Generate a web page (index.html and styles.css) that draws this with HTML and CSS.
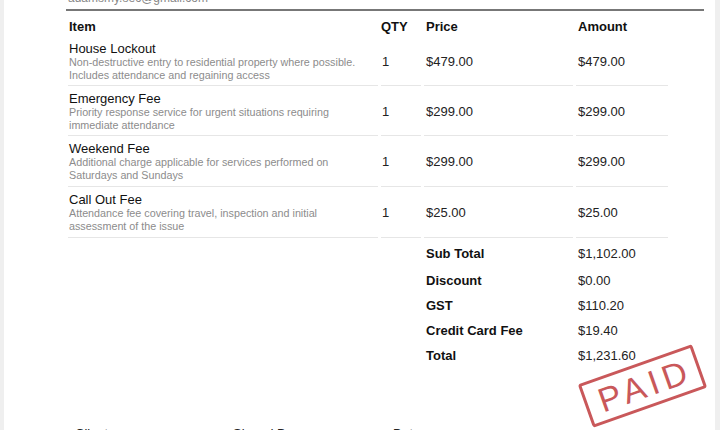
FILE: index.html
```html
<!DOCTYPE html>
<html lang="en">
<head>
    <meta charset="UTF-8">
    <meta name="viewport" content="width=device-width, initial-scale=1.0">
    <title>Invoice</title>
    <link rel="stylesheet" href="styles.css">
</head>
<body>
    <div class="sheet">
        <div class="bill-to">
            <div class="email">adamsmy.sec@gmail.com</div>
        </div>

        <table class="items">
            <colgroup>
                <col class="col-item">
                <col class="col-qty">
                <col class="col-price">
                <col class="col-amount">
            </colgroup>
            <thead>
                <tr>
                    <th class="first">Item</th>
                    <th class="qty">QTY</th>
                    <th>Price</th>
                    <th>Amount</th>
                </tr>
            </thead>
            <tbody>
                <tr>
                    <td class="first">
                        <div class="name">House Lockout</div>
                        <div class="desc">Non-destructive entry to residential property where possible. Includes attendance and regaining access</div>
                    </td>
                    <td class="qty">1</td>
                    <td>$479.00</td>
                    <td>$479.00</td>
                </tr>
                <tr>
                    <td class="first">
                        <div class="name">Emergency Fee</div>
                        <div class="desc">Priority response service for urgent situations requiring immediate attendance</div>
                    </td>
                    <td class="qty">1</td>
                    <td>$299.00</td>
                    <td>$299.00</td>
                </tr>
                <tr>
                    <td class="first">
                        <div class="name">Weekend Fee</div>
                        <div class="desc">Additional charge applicable for services performed on Saturdays and Sundays</div>
                    </td>
                    <td class="qty">1</td>
                    <td>$299.00</td>
                    <td>$299.00</td>
                </tr>
                <tr>
                    <td class="first">
                        <div class="name">Call Out Fee</div>
                        <div class="desc">Attendance fee covering travel, inspection and initial assessment of the issue</div>
                    </td>
                    <td class="qty">1</td>
                    <td>$25.00</td>
                    <td>$25.00</td>
                </tr>
            </tbody>
            <tfoot>
                <tr class="subtotal">
                    <td colspan="2"></td>
                    <th>Sub Total</th>
                    <td>$1,102.00</td>
                </tr>
                <tr>
                    <td colspan="2"></td>
                    <th>Discount</th>
                    <td>$0.00</td>
                </tr>
                <tr>
                    <td colspan="2"></td>
                    <th>GST</th>
                    <td>$110.20</td>
                </tr>
                <tr>
                    <td colspan="2"></td>
                    <th>Credit Card Fee</th>
                    <td>$19.40</td>
                </tr>
                <tr>
                    <td colspan="2"></td>
                    <th>Total</th>
                    <td>$1,231.60</td>
                </tr>
            </tfoot>
        </table>

        <div class="stamp">PAID</div>

        <div class="signoff">
            <span>Client</span>
            <span>Signed By</span>
            <span>Date</span>
        </div>
    </div>
</body>
</html>
```

FILE: styles.css
```css
body {
    margin: 0;
    background: #efefef;
    font-family: "Liberation Sans", Arial, sans-serif;
    color: #1a1a1a;
}
.sheet {
    position: relative;
    margin-left: 4px;
    width: 711px;
    min-height: 100vh;
    background: white;
    overflow: hidden;
}
.bill-to {
    margin-left: 62px;
    width: 636px;
    padding-left: 2px;
    padding-bottom: 4px;
    border-bottom: 2px solid #777;
}
.email {
    margin-top: -9px;
    font-size: 12px;
    line-height: 14px;
    color: #888;
}
.items {
    margin-left: 61px;
    margin-top: 1px;
    border-collapse: separate;
    border-spacing: 3px 0;
    table-layout: fixed;
    width: 606px;
    font-size: 13px;
}
.col-item { width: 310px; }
.col-qty { width: 40px; }
.col-price { width: 149px; }
.col-amount { width: 92px; }
.items th,
.items td {
    padding: 0 2px;
    text-align: left;
}
.items .first {
    padding-left: 1px;
}
.items .qty {
    padding-left: 0;
}
.items thead th {
    padding-top: 7px;
    padding-bottom: 2px;
    line-height: 15px;
    font-weight: bold;
    color: #111;
}
.items tbody td {
    padding-top: 5px;
    padding-bottom: 3px;
    border-bottom: 1px solid #e6e6e6;
    color: #222;
}
.items tbody tr:nth-child(n+3) td {
    padding-bottom: 4px;
}
.items tbody .qty {
    padding-left: 1px;
}
.name {
    line-height: 15px;
    color: #111;
}
.desc {
    max-width: 295px;
    font-size: 10.75px;
    line-height: 13px;
    color: #8c8c8c;
}
.items tfoot tr {
    height: 25px;
}
.items tfoot .subtotal {
    height: 30px;
}
.items tfoot th {
    font-weight: bold;
    color: #111;
}
.items tfoot td {
    color: #222;
}
.stamp {
    position: absolute;
    left: 578px;
    top: 363px;
    width: 121px;
    height: 46px;
    box-sizing: border-box;
    border: 3px solid #c9585a;
    border-radius: 3px;
    transform: rotate(-19.5deg);
    color: #c9585a;
    font-size: 34px;
    line-height: 40px;
    letter-spacing: 5px;
    text-align: center;
    text-indent: 5px;
}
.signoff {
    display: grid;
    grid-template-columns: 158px 160px auto;
    margin-top: 58px;
    padding-left: 71px;
    font-size: 13px;
    line-height: 15px;
    color: #222;
}
```
